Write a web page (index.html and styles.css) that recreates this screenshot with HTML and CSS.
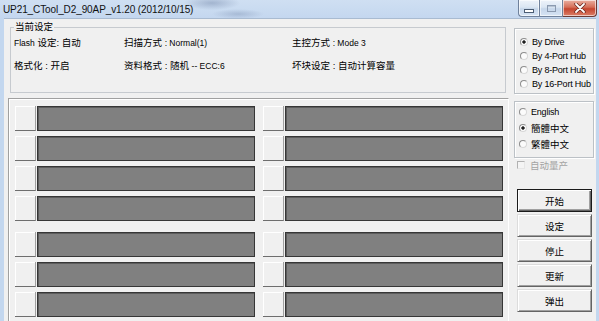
FILE: index.html
```html
<!DOCTYPE html>
<html>
<head>
	<meta charset="utf-8">
	<title>UP21_CTool_D2_90AP_v1.20 (2012/10/15)</title>
	<link rel="stylesheet" href="styles.css">
</head>
<body>
<div class="window">
	<div class="titlebar">
		<span class="title">UP21_CTool_D2_90AP_v1.20 (2012/10/15)</span>
		<div class="caption">
			<span class="cb min"><i></i></span>
			<span class="cb max"><i></i></span>
			<span class="cb close">
				<svg width="12" height="10" viewBox="0 0 12 10">
					<path d="M2 1 L10 9 M10 1 L2 9" stroke="#6b2a22" stroke-width="3.4" stroke-linecap="round"/>
					<path d="M2 1 L10 9 M10 1 L2 9" stroke="#fff" stroke-width="1.8" stroke-linecap="round"/>
				</svg>
			</span>
		</div>
	</div>

	<div class="client">
		<div class="main">
			<fieldset class="settings">
				<legend>当前设定</legend>
				<div class="info">
					<div><span class="en">Flash</span> 设定: 自动</div>
					<div>扫描方式 <span class="en">: Normal(1)</span></div>
					<div>主控方式 <span class="en">: Mode 3</span></div>
					<div>格式化 : 开启</div>
					<div>资料格式 : 随机 <span class="en">-- ECC:6</span></div>
					<div>坏块设定 : 自动计算容量</div>
				</div>
			</fieldset>

			<div class="ports">
				<div class="group">
					<div class="row"><div class="cell"><span class="slot"></span><span class="bar"></span></div><div class="cell"><span class="slot"></span><span class="bar"></span></div></div>
					<div class="row"><div class="cell"><span class="slot"></span><span class="bar"></span></div><div class="cell"><span class="slot"></span><span class="bar"></span></div></div>
					<div class="row"><div class="cell"><span class="slot"></span><span class="bar"></span></div><div class="cell"><span class="slot"></span><span class="bar"></span></div></div>
					<div class="row"><div class="cell"><span class="slot"></span><span class="bar"></span></div><div class="cell"><span class="slot"></span><span class="bar"></span></div></div>
				</div>
				<div class="group">
					<div class="row"><div class="cell"><span class="slot"></span><span class="bar"></span></div><div class="cell"><span class="slot"></span><span class="bar"></span></div></div>
					<div class="row"><div class="cell"><span class="slot"></span><span class="bar"></span></div><div class="cell"><span class="slot"></span><span class="bar"></span></div></div>
					<div class="row"><div class="cell"><span class="slot"></span><span class="bar"></span></div><div class="cell"><span class="slot"></span><span class="bar"></span></div></div>
					<div class="row"><div class="cell"><span class="slot"></span><span class="bar"></span></div><div class="cell"><span class="slot"></span><span class="bar"></span></div></div>
				</div>
			</div>
		</div>

		<div class="side">
			<div class="box mode">
				<div class="radio"><span class="dot on"></span>By Drive</div>
				<div class="radio"><span class="dot"></span>By 4-Port Hub</div>
				<div class="radio"><span class="dot"></span>By 8-Port Hub</div>
				<div class="radio"><span class="dot"></span>By 16-Port Hub</div>
			</div>
			<div class="box lang">
				<div class="radio"><span class="dot"></span>English</div>
				<div class="radio cjk"><span class="dot on"></span>簡體中文</div>
				<div class="radio cjk"><span class="dot"></span>繁體中文</div>
			</div>
			<div class="check"><span class="tick"></span>自动量产</div>
			<div class="buttons">
				<button class="btn default">开始</button>
				<button class="btn">设定</button>
				<button class="btn">停止</button>
				<button class="btn">更新</button>
				<button class="btn">弹出</button>
			</div>
		</div>
	</div>
</div>
</body>
</html>
```

FILE: styles.css
```css
body {
	margin:0;
	overflow:hidden;
	background:#c3d7ef;
	font-family:"Liberation Sans", "Noto Sans CJK SC", sans-serif;
	color:#000;
	}
.window {
	width:599px;
	height:321px;
	overflow:hidden;
	display:flex;
	flex-direction:column;
	background:#c3d7ef;
	}

/* title bar */
.titlebar {
	height:18px;
	flex:none;
	display:flex;
	justify-content:space-between;
	align-items:flex-start;
	padding:0 2px 0 3px;
	background:
		radial-gradient(ellipse 28px 7px at 212px 3px, rgba(110,130,165,.45), transparent),
		radial-gradient(ellipse 26px 5px at 238px 14px, rgba(110,130,165,.35), transparent),
		linear-gradient(#cfdff2, #c4d7ef);
	}
.title {
	font-size:10px;
	line-height:20px;
	letter-spacing:-0.1px;
	color:#111;
	}
.caption {
	display:flex;
	}
.cb {
	height:17px;
	box-sizing:border-box;
	display:flex;
	align-items:center;
	justify-content:center;
	border:1px solid #6f819b;
	border-top:none;
	background:linear-gradient(#eef3fa, #dbe6f3 45%, #c6d6ea 55%, #d6e4f4);
	box-shadow:inset 0 0 0 1px rgba(255,255,255,.6);
	}
.min {
	width:21px;
	border-radius:0 0 0 4px;
	border-right:none;
	}
.min i {
	width:8px;
	height:2px;
	margin-top:6px;
	background:#fff;
	border:1px solid #4c5d74;
	}
.max {
	width:24px;
	}
.max i {
	width:7px;
	height:5px;
	border:1px solid #8b9ab0;
	box-shadow:inset 0 1px #b8c4d3;
	}
.close {
	width:34px;
	border-color:#6b3a34;
	border-left:none;
	border-radius:0 0 4px 0;
	background:linear-gradient(#eab0a2, #d56e58 45%, #c4452f 55%, #dc7f68);
	}

/* client area */
.client {
	flex:1;
	min-height:0;
	display:flex;
	margin:0 3px 0 4px;
	padding:1px 0 0 4px;
	background:#f0f0f0;
	border-top:1px solid #a9bbd1;
	}
.main {
	width:501px;
	display:flex;
	flex-direction:column;
	}
.settings {
	margin:0 3px 0 2px;
	padding:2px 0 19px 3px;
	border:1px solid #c6cacf;
	min-width:0;
	}
.settings legend {
	font-size:9.5px;
	line-height:14px;
	padding:0 1px;
	}
.info {
	display:grid;
	grid-template-columns:110px 168px 1fr;
	row-gap:9px;
	font-size:9.5px;
	line-height:14px;
	white-space:nowrap;
	}
.en {
	font-size:8.5px;
	}

/* port rows */
.ports {
	flex:1;
	min-height:0;
	overflow:hidden;
	margin-top:5px;
	padding:7px 5px 0 6px;
	border:1px solid #a0a0a0;
	border-right-color:#fff;
	border-bottom:none;
	box-shadow:inset 1px 1px #fff;
	display:flex;
	flex-direction:column;
	gap:11px;
	}
.group {
	flex:none;
	display:flex;
	flex-direction:column;
	gap:5px;
	}
.row {
	height:25px;
	display:grid;
	grid-template-columns:240px 240px;
	column-gap:8px;
	}
.cell {
	display:flex;
	gap:1px;
	}
.slot {
	width:21px;
	box-sizing:border-box;
	background:#f0f0f0;
	border-right:1px solid #a0a0a0;
	border-bottom:1px solid #6e6e6e;
	box-shadow:inset 1px 1px #fff;
	}
.bar {
	flex:1;
	box-sizing:border-box;
	background:#808080;
	border:1px solid #363636;
	box-shadow:inset 1px 1px #5c5c5c;
	}

/* right column */
.side {
	width:80px;
	margin-left:5px;
	display:flex;
	flex-direction:column;
	}
.box {
	box-sizing:border-box;
	border:1px solid #bcc1c6;
	box-shadow:inset 1px 1px #fff, 1px 1px #fff;
	}
.mode {
	margin-top:8px;
	height:66px;
	padding:6px 0 0 5px;
	}
.lang {
	margin-top:7px;
	height:57px;
	padding:2px 0 0 4px;
	}
.lang .radio {
	height:16px;
	}
.radio {
	height:14px;
	display:flex;
	align-items:center;
	gap:4px;
	font-size:9px;
	letter-spacing:-0.2px;
	white-space:nowrap;
	}
.radio.cjk {
	font-size:9.5px;
	letter-spacing:0;
	}
.dot {
	width:8px;
	height:8px;
	flex:none;
	box-sizing:border-box;
	border-radius:50%;
	border:1px solid #8d8d8d;
	border-right-color:#d8d8d8;
	border-bottom-color:#d8d8d8;
	background:#fbfbfb;
	}
.dot.on {
	background:radial-gradient(circle, #1f1f1f 0 1.4px, #fbfbfb 1.9px);
	}
.check {
	height:12px;
	margin-top:1px;
	padding-left:3px;
	display:flex;
	align-items:center;
	gap:5px;
	font-size:9.5px;
	color:#a3a3a3;
	}
.tick {
	width:8px;
	height:8px;
	box-sizing:border-box;
	border:1px solid #b1b1b1;
	border-right-color:#e6e6e6;
	border-bottom-color:#e6e6e6;
	background:#f4f4f4;
	}
.buttons {
	margin-top:18px;
	padding-left:3px;
	display:flex;
	flex-direction:column;
	gap:2px;
	}
.btn {
	width:75px;
	height:23px;
	margin:0;
	padding:0;
	font:9.5px "Noto Sans CJK SC", sans-serif;
	color:#000;
	background:#f0f0f0;
	border:1px solid;
	border-color:#dcdcdc #646464 #646464 #dcdcdc;
	box-shadow:inset 1px 1px #fff, inset -1px -1px #a0a0a0;
	}
.btn.default {
	border-color:#1a1a1a;
	box-shadow:inset 1px 1px #fff, inset -1px -1px #646464, inset -2px -2px #a0a0a0;
	}
```
